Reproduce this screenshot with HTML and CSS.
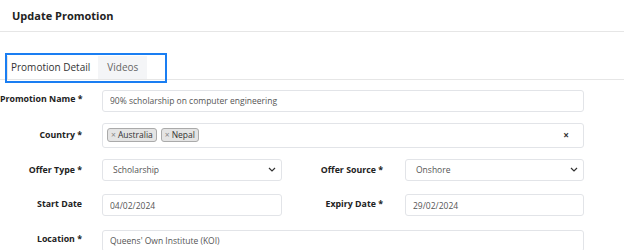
FILE: index.html
```html
<!DOCTYPE html>
<html lang="en">
<head>
    <meta charset="UTF-8">
    <meta name="viewport" content="width=device-width, initial-scale=1.0">
    <title>Update Promotion</title>
    <link rel="stylesheet" href="styles.css">
</head>
<body>
    <header class="page-header">
        <h1>Update Promotion</h1>
    </header>
    <div class="tabs-wrap">
        <ul class="tabs">
            <li class="tab active">Promotion Detail</li>
            <li class="tab">Videos</li>
        </ul>
        <div class="highlight"></div>
    </div>
    <form class="promo-form">
        <label class="label">Promotion Name *</label>
        <div class="field wide">
            <input type="text" class="input" value="90% scholarship on computer engineering">
        </div>

        <label class="label">Country *</label>
        <div class="field wide">
            <div class="multi">
                <span class="tag"><span class="tag-x">×</span>Australia</span>
                <span class="tag"><span class="tag-x">×</span>Nepal</span>
                <span class="clear">×</span>
            </div>
        </div>

        <label class="label">Offer Type *</label>
        <div class="field">
            <div class="select">Scholarship
                <svg class="chev" width="8" height="5" viewBox="0 0 8 5"><path d="M1 1l3 3 3-3" fill="none" stroke="#333" stroke-width="1.2"/></svg>
            </div>
        </div>
        <label class="label second">Offer Source *</label>
        <div class="field">
            <div class="select">Onshore
                <svg class="chev" width="8" height="5" viewBox="0 0 8 5"><path d="M1 1l3 3 3-3" fill="none" stroke="#333" stroke-width="1.2"/></svg>
            </div>
        </div>

        <label class="label">Start Date</label>
        <div class="field">
            <input type="text" class="input" value="04/02/2024">
        </div>
        <label class="label second">Expiry Date *</label>
        <div class="field">
            <input type="text" class="input" value="29/02/2024">
        </div>

        <label class="label">Location *</label>
        <div class="field wide">
            <input type="text" class="input" value="Queens' Own Institute (KOI)">
        </div>
    </form>
</body>
</html>
```
FILE: styles.css
```css
body {
    font-family: "Open Sans", Arial, sans-serif;
    margin: 0;
    padding: 0;
    background-color: #fff;
    color: #222;
}
.page-header {
    height: 31px;
    border-bottom: 1px solid #e6e6e6;
    padding: 0 12px;
    display: flex;
    align-items: center;
}
h1 {
    margin: 0;
    font-size: 11px;
    font-weight: 700;
    color: #222;
}
.tabs-wrap {
    position: relative;
    padding-top: 24px;
}
.tabs {
    list-style: none;
    margin: 0;
    padding: 0 0 0 7px;
    display: flex;
    height: 23px;
    border-bottom: 1px solid #e6e6e6;
}
.tab {
    white-space: nowrap;
    font-size: 10px;
    line-height: 23px;
}
.tab.active {
    color: #333;
    border-left: 1px solid #e6e6e6;
    padding: 0 8px 0 3px;
}
.tab + .tab {
    background-color: #f4f5f7;
    color: #666;
    padding: 0 9px;
}
.highlight {
    position: absolute;
    left: 5px;
    top: 21px;
    width: 158px;
    height: 26px;
    border: 2px solid #1a7ef2;
}
.promo-form {
    display: grid;
    grid-template-columns: 102px 180px 123px 179px;
    row-gap: 11px;
    margin-top: 7px;
    align-items: center;
}
.label {
    white-space: nowrap;
    font-size: 8.8px;
    font-weight: 700;
    color: #222;
    text-align: right;
    padding-right: 20px;
}
.label.second {
    padding-right: 22px;
}
.field.wide {
    grid-column: 2 / 5;
}
.input, .select, .multi {
    box-sizing: border-box;
    width: 100%;
    height: 22px;
    border: 1px solid #e2e4e8;
    border-radius: 3px;
    font-family: "Open Sans", Arial, sans-serif;
    font-size: 8.5px;
    color: #555;
    padding: 0 7px;
    background: #fff;
    outline: none;
}
.select {
    display: flex;
    align-items: center;
    justify-content: space-between;
    padding: 0 5px 0 10px;
}
.multi {
    height: 25px;
    display: flex;
    align-items: center;
    gap: 4px;
    padding: 0 4px;
}
.tag {
    background-color: #e4e4e4;
    border: 1px solid #aaa;
    border-radius: 3px;
    font-size: 8.5px;
    color: #333;
    padding: 0 3px;
    line-height: 12px;
}
.tag-x {
    color: #888;
    margin-right: 2px;
}
.clear {
    margin-left: auto;
    margin-right: 10px;
    font-size: 10px;
    font-weight: 700;
    color: #333;
}
```
